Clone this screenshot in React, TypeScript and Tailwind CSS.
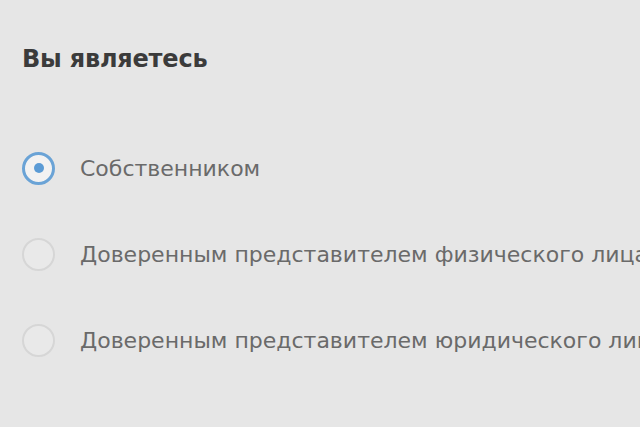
import { useState } from "react";

const options = [
    "Собственником",
    "Доверенным представителем физического лица",
    "Доверенным представителем юридического лица",
];

export default function App() {
    const [selected, setSelected] = useState(0);

    return (
        <div
            className="w-[640px] h-[427px] overflow-hidden bg-[#e6e6e6] pl-[22px] pt-[42px]"
            style={{ fontFamily: '"DejaVu Sans", "Liberation Sans", sans-serif' }}
        >
            <h2 className="text-[24px] leading-[34px] font-bold text-[#3b3b3b] tracking-[-0.2px] whitespace-nowrap">
                Вы являетесь
            </h2>
            <div className="flex flex-col gap-[52px] mt-[75px]">
                {options.map((label, i) => (
                    <label
                        key={label}
                        className="flex flex-row items-center gap-[25px] h-[34px] cursor-pointer whitespace-nowrap"
                        onClick={() => setSelected(i)}
                    >
                        {selected === i ? (
                            <span className="w-[33px] h-[33px] shrink-0 rounded-full border-[3px] border-[#6aa3d6] bg-[#f2f2f2] flex items-center justify-center">
                                <span className="w-[10px] h-[10px] rounded-full bg-[#5b9bd5]" />
                            </span>
                        ) : (
                            <span className="w-[33px] h-[33px] shrink-0 rounded-full border-2 border-[#d6d6d6] bg-[#e9e9e9]" />
                        )}
                        <span className="text-[22px] text-[#6a6a6a]">{label}</span>
                    </label>
                ))}
            </div>
        </div>
    );
}
